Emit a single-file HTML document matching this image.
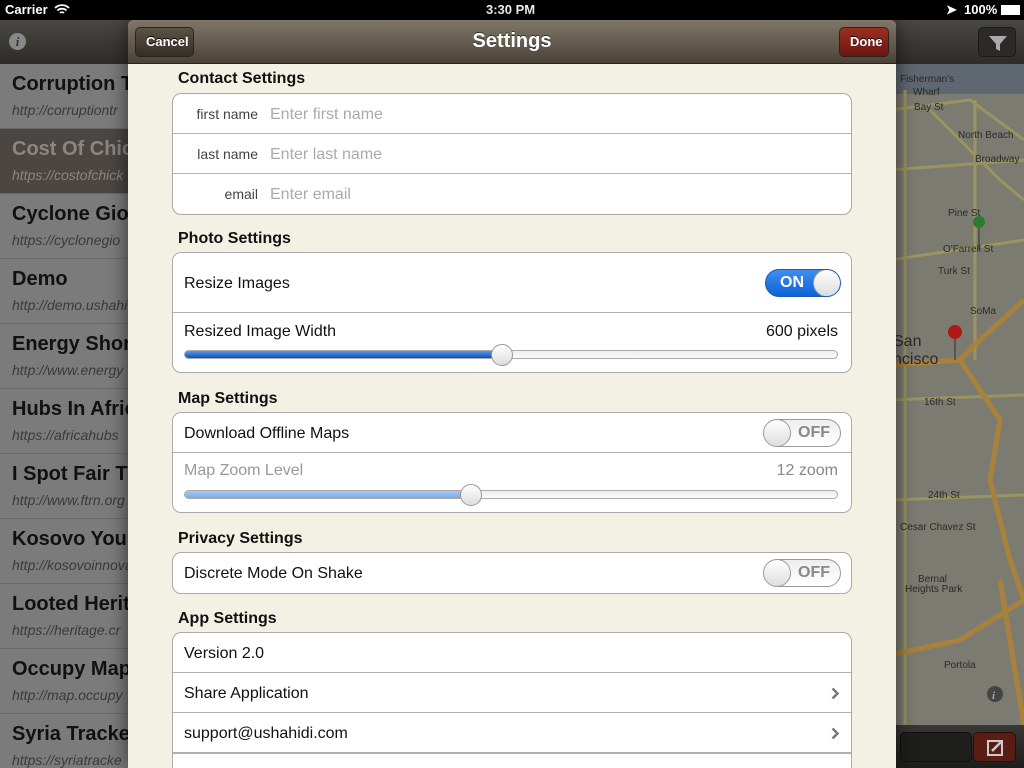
<!DOCTYPE html>
<html style="width:1024px;height:768px;overflow:hidden"><head><meta charset="utf-8"><style>
*{margin:0;padding:0;box-sizing:border-box}
body{width:1024px;height:768px;overflow:hidden;background:#000;font-family:"Liberation Sans",sans-serif;position:relative}
.status{position:absolute;top:0;left:0;width:1024px;height:20px;background:#000;color:#fff;font-size:13px;font-weight:bold}
.lnav{position:absolute;top:20px;left:0;width:140px;height:44px;background:linear-gradient(#4a4844,#2e2c29)}
.rnav{position:absolute;top:20px;left:890px;width:134px;height:44px;background:linear-gradient(#4a4844,#2e2c29)}
.list{position:absolute;top:64px;left:0;width:140px;height:704px;background:#7b7b7b;overflow:hidden}
.row{height:65px;border-bottom:1px solid #6a6a6a;padding:8px 12px;white-space:nowrap;overflow:hidden}
.row b{display:block;font-size:20px;color:#111;margin-top:1px}
.row i{display:block;font-size:14px;color:#3a3a3a;margin-top:6px}
.map{position:absolute;top:64px;left:890px;width:134px;height:661px;background:#7c7b72;overflow:hidden}
.tb{position:absolute;top:725px;left:890px;width:134px;height:43px;background:linear-gradient(#3a3835,#1e1d1b)}
.modal{position:absolute;top:20px;left:128px;width:768px;height:748px;background:#f3f0e4;border-radius:6px 6px 0 0;overflow:hidden;box-shadow:0 0 20px rgba(0,0,0,.6)}
.mh{height:44px;background:linear-gradient(#80776a,#4a4237);border-bottom:1px solid #2a251f;position:relative;color:#fff;text-align:center;font-weight:bold;font-size:20px;line-height:43px;text-shadow:0 -1px 0 #333}
.btn{position:absolute;top:7px;height:30px;border-radius:5px;font-size:13px;line-height:28px;padding:0 10px;border:1px solid #2a241e;text-shadow:0 -1px 0 #000}
.sec{position:absolute;left:50px;font-weight:bold;font-size:16px;color:#111}
.grp{position:absolute;left:44px;width:680px;background:#fff;border:1px solid #aaa;border-radius:9px;overflow:hidden}
.c{height:40px;border-bottom:1px solid #b0b0b0;position:relative;font-size:16px;color:#111;line-height:41px;padding-left:11px}
.c:last-child{border-bottom:none}
.lab{display:inline-block;width:74px;text-align:right;font-size:14px;color:#444}
.ph{color:#aaa;margin-left:12px;font-size:16px}
.chev{position:absolute;right:12px;top:14px}
.sw{position:absolute;right:10px;top:7px;width:78px;height:28px;border-radius:14px;border:1px solid #999;overflow:hidden}
.knob{position:absolute;top:-1px;width:28px;height:28px;border-radius:14px;background:linear-gradient(#fff,#ddd);border:1px solid #999}
.trk{position:absolute;left:11px;right:13px;height:9px;border-radius:5px;border:1px solid #aaa;background:linear-gradient(#eee,#fafafa)}
</style></head><body>
<div class="status"><span style="position:absolute;left:5px;top:2px">Carrier</span>
<svg style="position:absolute;left:54px;top:4px" width="16" height="12" viewBox="0 0 16 12"><path d="M1 4a10 10 0 0 1 14 0M3.5 6.5a6.5 6.5 0 0 1 9 0M6 9a3 3 0 0 1 4 0" stroke="#fff" stroke-width="1.8" fill="none"/></svg>
<span style="position:absolute;left:486px;top:2px">3:30 PM</span>
<span style="position:absolute;left:946px;top:2px">➤</span><span style="position:absolute;left:964px;top:2px">100%</span>
<span style="position:absolute;left:1001px;top:5px;width:19px;height:10px;border:1px solid #fff;background:#fff"></span></div>
<div class="lnav"><div style="position:absolute;left:9px;top:13px;width:17px;height:17px;border-radius:50%;background:#888;color:#333;font:italic bold 13px 'Liberation Serif';text-align:center;line-height:17px">i</div></div>
<div class="rnav"><div style="position:absolute;left:88px;top:7px;width:38px;height:30px;border-radius:5px;background:#2b2a28;border:1px solid #1a1a1a"><svg width="38" height="30"><path d="M10 8h18l-7 8v7l-4 -2v-5z" fill="#aaa"/></svg></div></div>
<div class="list">
<div class="row"><b>Corruption T</b><i>http://corruptiontr</i></div>
<div class="row" style="background:#4b4642"><b style="color:#8a8682">Cost Of Chic</b><i style="color:#8a8682">https://costofchick</i></div>
<div class="row"><b>Cyclone Gio</b><i>https://cyclonegio</i></div>
<div class="row"><b>Demo</b><i>http://demo.ushahi</i></div>
<div class="row"><b>Energy Shor</b><i>http://www.energy</i></div>
<div class="row"><b>Hubs In Afric</b><i>https://africahubs</i></div>
<div class="row"><b>I Spot Fair T</b><i>http://www.ftrn.org</i></div>
<div class="row"><b>Kosovo You</b><i>http://kosovoinnova</i></div>
<div class="row"><b>Looted Herit</b><i>https://heritage.cr</i></div>
<div class="row"><b>Occupy Map</b><i>http://map.occupy</i></div>
<div class="row" style="height:58px"><b>Syria Tracke</b><i>https://syriatracke</i></div>
</div>
<div class="map">
<svg width="134" height="661" viewBox="890 64 134 661">
<rect x="890" y="64" width="134" height="30" fill="#5f6770"/>
<g stroke="#9a9460" stroke-width="3" fill="none">
<path d="M890 110 L970 100 L1024 140"/><path d="M930 110 L1000 180 L1024 200"/><path d="M890 170 L1024 160"/><path d="M905 90 L905 725"/><path d="M890 260 L1024 240"/><path d="M975 100 L975 360"/><path d="M890 400 L1024 395"/><path d="M890 500 L1024 495"/></g>
<g stroke="#a8823a" stroke-width="5" fill="none"><path d="M1024 300 L980 340 L960 360 L1000 420 L990 480 L1010 560 L1024 600"/><path d="M890 365 L960 360"/><path d="M890 655 L960 640 L1024 600"/><path d="M1000 580 L1024 725"/></g>
<circle cx="979" cy="222" r="6" fill="#2a7a30"/><line x1="979" y1="228" x2="979" y2="250" stroke="#555" stroke-width="2"/>
<circle cx="955" cy="332" r="7" fill="#b01818"/><line x1="955" y1="339" x2="955" y2="360" stroke="#555" stroke-width="2"/>
<g font-family="Liberation Sans" font-size="10" fill="#2a2a2a"><text x="900" y="82">Fisherman's</text><text x="913" y="95">Wharf</text><text x="914" y="110">Bay St</text><text x="958" y="138">North Beach</text><text x="975" y="162">Broadway</text><text x="948" y="216">Pine St</text><text x="943" y="252">O'Farrell St</text><text x="938" y="274">Turk St</text><text x="970" y="314">SoMa</text><text x="893" y="346" font-size="16">San</text><text x="893" y="364" font-size="16">ncisco</text><text x="924" y="405">16th St</text><text x="928" y="498">24th St</text><text x="900" y="530">Cesar Chavez St</text><text x="918" y="582">Bernal</text><text x="905" y="592">Heights Park</text><text x="944" y="668">Portola</text></g>
<circle cx="995" cy="694" r="8" fill="#444"/><text x="992" y="699" font-size="11" font-style="italic" font-weight="bold" fill="#aaa" font-family="Liberation Serif">i</text>
</svg></div>
<div class="tb"><div style="position:absolute;left:10px;top:7px;width:72px;height:30px;border-radius:5px;background:#1e1e1c;border:1px solid #111"></div><div style="position:absolute;left:83px;top:7px;width:43px;height:30px;border-radius:5px;background:#5a1d16;border:1px solid #2a0e0a"><svg width="43" height="30"><rect x="14" y="8" width="14" height="14" stroke="#ccc" stroke-width="2" fill="none"/><path d="M18 18l10-10" stroke="#ccc" stroke-width="2.5"/></svg></div></div>
<div class="modal">
<div class="mh">Settings
<div class="btn" style="left:7px;background:linear-gradient(#5a5245,#352e26);width:59px">Cancel</div>
<div class="btn" style="right:7px;background:linear-gradient(#9a3020,#6a1610);width:50px">Done</div></div>
<div class="sec" style="top:50px">Contact Settings</div>
<div class="grp" style="top:73px">
<div class="c"><span class="lab">first name</span><span class="ph">Enter first name</span></div>
<div class="c"><span class="lab">last name</span><span class="ph">Enter last name</span></div>
<div class="c"><span class="lab">email</span><span class="ph">Enter email</span></div></div>
<div class="sec" style="top:210px">Photo Settings</div>
<div class="grp" style="top:232px">
<div class="c" style="height:60px;line-height:61px">Resize Images<div class="sw" style="top:16px;width:76px;background:linear-gradient(#3f8ef0,#0c63d8);border-color:#1a5ab0"><span style="position:absolute;left:14px;top:0;line-height:26px;color:#fff;font-weight:bold;font-size:16px">ON</span><div class="knob" style="right:-1px"></div></div></div>
<div class="c" style="height:59px;line-height:1"><div style="position:absolute;top:11px;left:11px">Resized Image Width</div><div style="position:absolute;top:11px;right:13px">600 pixels</div>
<div class="trk" style="top:37px"><div style="width:318px;height:7px;border-radius:4px;background:linear-gradient(#5c9ae8,#0d4fb5)"></div></div>
<div class="knob" style="left:318px;top:31px;width:22px;height:22px"></div></div></div>
<div class="sec" style="top:370px">Map Settings</div>
<div class="grp" style="top:392px">
<div class="c">Download Offline Maps<div class="sw" style="top:6px;background:linear-gradient(#eee,#fff)"><span style="position:absolute;right:10px;top:0;line-height:26px;color:#888;font-weight:bold;font-size:16px">OFF</span><div class="knob" style="left:-1px"></div></div></div>
<div class="c" style="height:59px;line-height:1"><div style="position:absolute;top:10px;left:11px;color:#999">Map Zoom Level</div><div style="position:absolute;top:10px;right:13px;color:#888">12 zoom</div>
<div class="trk" style="top:37px"><div style="width:288px;height:7px;border-radius:4px;background:linear-gradient(#a8c8f0,#7aaae8)"></div></div>
<div class="knob" style="left:287px;top:31px;width:22px;height:22px"></div></div></div>
<div class="sec" style="top:510px">Privacy Settings</div>
<div class="grp" style="top:532px">
<div class="c">Discrete Mode On Shake<div class="sw" style="top:6px;background:linear-gradient(#eee,#fff)"><span style="position:absolute;right:10px;top:0;line-height:26px;color:#888;font-weight:bold;font-size:16px">OFF</span><div class="knob" style="left:-1px"></div></div></div></div>
<div class="sec" style="top:590px">App Settings</div>
<div class="grp" style="top:612px;height:136px;border-bottom:none;border-radius:9px 9px 0 0">
<div class="c">Version 2.0</div>
<div class="c">Share Application<svg class="chev" width="8" height="13"><path d="M1.5 1.5l5 5-5 5" stroke="#777" stroke-width="2.5" fill="none"/></svg></div>
<div class="c">support@ushahidi.com<svg class="chev" width="8" height="13"><path d="M1.5 1.5l5 5-5 5" stroke="#777" stroke-width="2.5" fill="none"/></svg></div>
<div class="c" style="height:14px;border-top:1px solid #b0b0b0;border-bottom:none"></div></div>
</div>
</body></html>
